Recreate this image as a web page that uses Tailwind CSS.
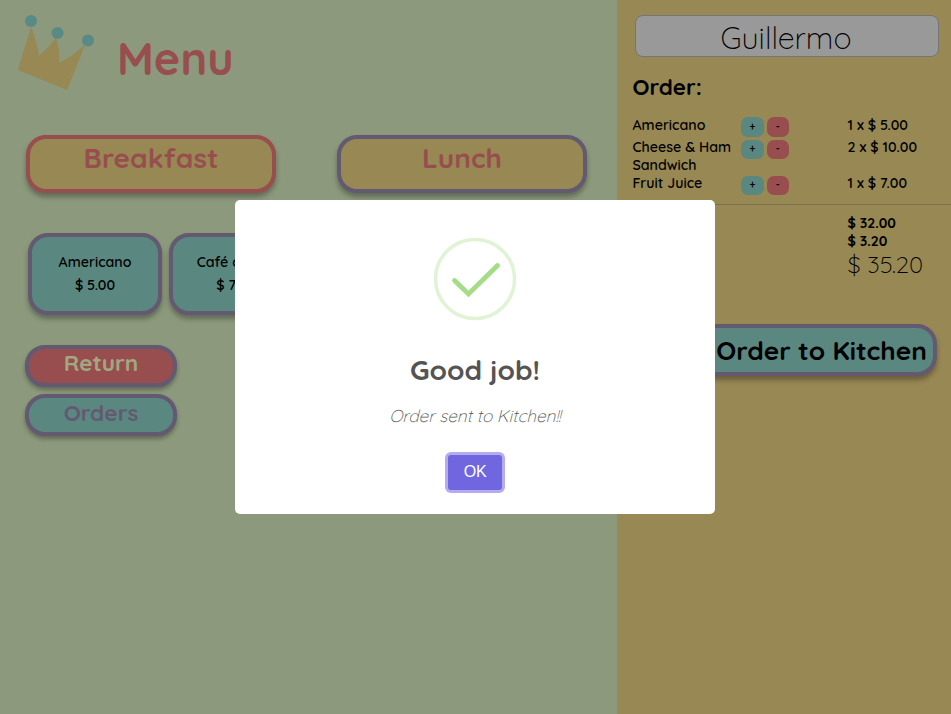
<!DOCTYPE html>
<html lang="en">
<head>
<meta charset="utf-8">
<title>Menu</title>
<script src="https://cdn.jsdelivr.net/npm/@tailwindcss/browser@4"></script>
</head>
<body class="relative flex h-[714px] w-[951px] overflow-hidden bg-[#8c997c] font-['Quicksand','Lato',sans-serif] text-black">
<main class="w-[617px] shrink-0">
  <header class="flex h-[116px] items-center">
    <svg class="h-[116px] w-[117px] shrink-0" viewBox="0 0 117 116">
      <path d="M31 27 Q37 42 39 56 Q49 47 56 38 Q60 50 59 63 Q74 55 85 45 L67 90 18 70Z" fill="#978854"/>
      <g fill="#5a8a86"><circle cx="31" cy="21" r="6"/><circle cx="57.500" cy="33" r="6"/><circle cx="88" cy="40.500" r="6"/></g>
    </svg>
    <h1 class="pt-px text-[45px] leading-none font-bold text-[#984e4e]">Menu</h1>
  </header>
  <nav class="mt-[19px] ml-[26px] flex gap-[61px]">
    <button class="h-[58px] w-[250px] rounded-[20px] border-[4.500px] border-[#984e4e] bg-[#978854] pb-[12px] text-[28px] leading-none font-bold text-[#984e4e] shadow-[0_4px_5px_rgba(0,0,0,0.3)]">Breakfast</button>
    <button class="h-[58px] w-[250px] rounded-[20px] border-[4.500px] border-[#635a72] bg-[#978854] pb-[12px] text-[28px] leading-none font-bold text-[#984e4e] shadow-[0_4px_5px_rgba(0,0,0,0.3)]">Lunch</button>
  </nav>
  <section class="mt-[40px] ml-[28px] flex gap-[7px] text-[14.200px] leading-[23px] font-semibold">
    <button class="h-[82px] w-[134px] rounded-[20px] border-[4.500px] border-[#635a72] bg-[#5a8780] shadow-[0_4px_5px_rgba(0,0,0,0.3)]"><p>Americano</p><p>$ 5.00</p></button>
    <button class="h-[82px] w-[134px] rounded-[20px] border-[4.500px] border-[#635a72] bg-[#5a8780] shadow-[0_4px_5px_rgba(0,0,0,0.3)]"><p>Café crema</p><p>$ 7.00</p></button>
  </section>
  <div class="mt-[30px] ml-[25px] flex w-[152px] flex-col gap-[7px] text-[22.600px] leading-none font-bold">
    <button class="h-[42px] rounded-[20px] border-[4.500px] border-[#635a72] bg-[#984e4e] pb-[6px] text-[#a1a881] shadow-[0_3px_4px_rgba(0,0,0,0.3)]">Return</button>
    <button class="h-[42px] rounded-[20px] border-[4.500px] border-[#635a72] bg-[#5a8780] pb-[4px] text-[#635a72] shadow-[0_3px_4px_rgba(0,0,0,0.3)]">Orders</button>
  </div>
</main>
<aside class="h-full w-[334px] bg-[#978854] pt-[15px]">
  <div class="ml-[17.500px] flex h-[42px] w-[304px] items-center justify-center rounded-[8px] border border-[#757575] bg-[#999] pt-[4px] pr-px text-[30.400px] leading-none font-light">Guillermo</div>
  <h2 class="mt-[18px] ml-[15.500px] text-[22.400px] leading-[24px] font-bold">Order:</h2>
  <div class="mt-[17px] ml-[15.500px] grid grid-cols-[108.500px_106.500px_1fr] text-[14.200px] leading-[18px] font-semibold">
    <p class="h-[22px]">Americano</p>
    <div class="flex gap-[3px] pt-[1px] text-[10px] font-semibold"><button class="h-[19.500px] w-[22.500px] rounded-[7px] bg-[#5a8780]">+</button><button class="h-[19.500px] w-[22.500px] rounded-[7px] bg-[#984e4e]">-</button></div>
    <p>1 x $ 5.00</p>
    <p class="h-[36px]"><span class="whitespace-nowrap">Cheese &amp; Ham</span><br>Sandwich</p>
    <div class="flex gap-[3px] pt-[1.500px] text-[10px] font-semibold"><button class="h-[19.500px] w-[22.500px] rounded-[7px] bg-[#5a8780]">+</button><button class="h-[19.500px] w-[22.500px] rounded-[7px] bg-[#984e4e]">-</button></div>
    <p>2 x $ 10.00</p>
    <p class="h-[30px]">Fruit Juice</p>
    <div class="flex gap-[3px] pt-[1.500px] text-[10px] font-semibold"><button class="h-[19.500px] w-[22.500px] rounded-[7px] bg-[#5a8780]">+</button><button class="h-[19.500px] w-[22.500px] rounded-[7px] bg-[#984e4e]">-</button></div>
    <p>1 x $ 7.00</p>
  </div>
  <hr class="border-[#78704f]">
  <div class="mt-[9px] ml-[230.500px] text-[14px] leading-[18px] font-bold">
    <p>$ 32.00</p><p>$ 3.20</p>
    <p class="text-[24px] leading-[29px] font-light">$ 35.20</p>
  </div>
  <button class="mt-[45px] ml-[20px] h-[52px] w-[300px] rounded-[20px] border-[4.500px] border-[#635a72] bg-[#5a8780] pt-[2px] pr-[6px] text-right text-[26.350px] leading-none font-bold whitespace-nowrap shadow-[0_4px_5px_rgba(0,0,0,0.3)]">Order to Kitchen</button>
</aside>
<div role="dialog" class="absolute top-[200px] left-[235px] flex h-[314px] w-[480px] flex-col items-center rounded-[5px] bg-white pt-[37px] text-[#545454]">
  <svg class="h-[84px] w-[84px] shrink-0" viewBox="0 0 84 84" fill="none" stroke="#a5dc86">
    <circle cx="42" cy="42" r="39.500" stroke-width="3.500" opacity=".35"/>
    <path d="M21.500 43.500 35.500 57 64.500 28.500" stroke-width="4.800" stroke-linecap="round"/>
  </svg>
  <h2 class="mt-[33px] text-[28px] leading-[32px] font-bold">Good job!</h2>
  <p class="mt-[20px] text-[17.200px] leading-[20px] font-light italic">Order sent to Kitchen!!</p>
  <button class="mt-[29px] h-[35px] w-[54px] rounded-[3px] bg-[#7066e0] pb-px font-['Liberation_Sans',Arial,sans-serif] text-[16px] tracking-[-0.300px] text-white ring-3 ring-[#b5acef]">OK</button>
</div>
</body>
</html>
